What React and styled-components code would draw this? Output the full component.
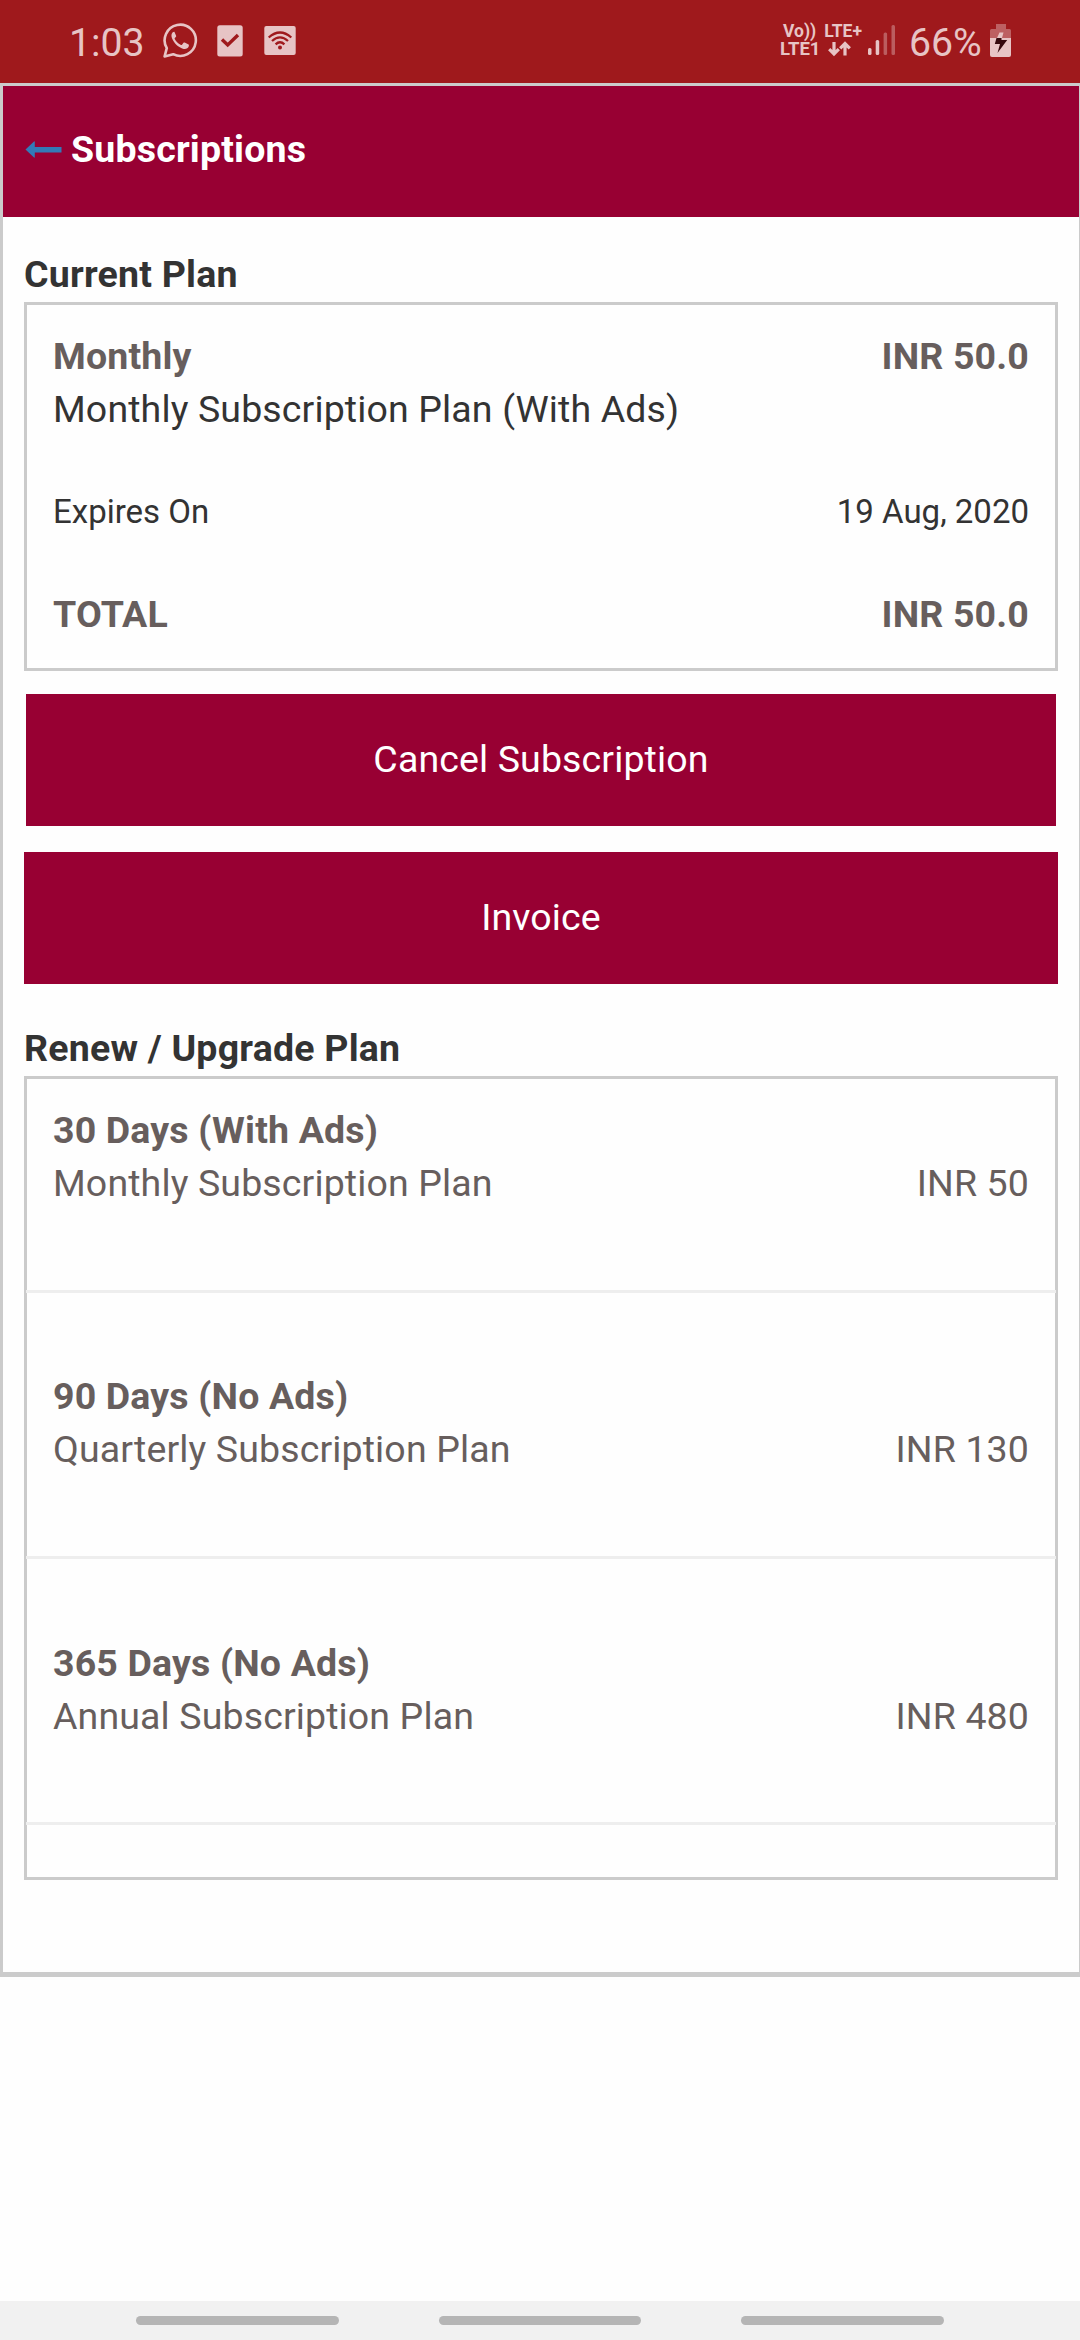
import React from "react";
import styled, { createGlobalStyle } from "styled-components";

const GlobalStyle = createGlobalStyle`
  *, *::before, *::after { box-sizing: border-box; }
  html, body { margin: 0; padding: 0; background: #fefefe; }
  body { font-family: Roboto, "Noto Sans", sans-serif; }
`;

const Screen = styled.div`
  display: flex;
  flex-direction: column;
  width: 1080px;
  height: 2340px;
  overflow: hidden;
  background: #fefefe;
`;

const StatusBar = styled.div`
  display: flex;
  flex: none;
  justify-content: space-between;
  align-items: flex-start;
  height: 83px;
  padding: 0 68px 0 69px;
  background: #9f191c;
  color: #e7c4c5;
`;

const StatusGroup = styled.div`
  display: flex;
  align-items: flex-start;
`;

const StatusText = styled.span`
  margin-top: 19px;
  margin-left: ${(p) => p.$left || 0}px;
  font-size: 39.2px;
  line-height: 48px;
  white-space: nowrap;
  width: ${(p) => p.$width}px;
`;

const StatusIcon = styled.svg`
  flex: none;
  margin: ${(p) => p.$top}px 0 0 ${(p) => p.$left}px;
`;

const Network = styled.div`
  display: grid;
  grid-template-rows: 18px 18px;
  width: 81px;
  margin-top: 22px;
  font-size: 17.5px;
  font-weight: 700;
  line-height: 18px;
`;

const NetworkLine = styled.div`
  display: flex;
  gap: 8px;
  padding-left: ${(p) => p.$indent}px;
  font-size: ${(p) => p.$size}px;
  white-space: nowrap;
`;

const Frame = styled.main`
  display: flex;
  flex: none;
  flex-direction: column;
  height: 1894px;
  border: solid #cbcbcb;
  border-width: 3px 1px 5px 3px;
`;

const Header = styled.header`
  display: flex;
  flex: none;
  align-items: flex-start;
  height: 131px;
  padding: 37px 0 0 22px;
  background: #980033;
`;

const BackIcon = styled.svg`
  flex: none;
  margin: 18px 8px 0 0;
`;

const Title = styled.h1`
  margin: 0;
  font-size: 37.5px;
  font-weight: 700;
  line-height: 53px;
  letter-spacing: 0.18px;
  color: #fff;
`;

const Content = styled.div`
  display: flex;
  flex-direction: column;
  padding: 31px 21px 0 21px;
`;

const Heading = styled.h2`
  margin: 0;
  height: 54px;
  font-size: 37.5px;
  font-weight: 700;
  line-height: 53px;
  letter-spacing: 0.22px;
  color: #333;
`;

const Card = styled.section`
  display: flex;
  flex-direction: column;
  height: ${(p) => p.$height}px;
  padding-top: 25px;
  border: 3px solid #cbcbcb;
`;

const Row = styled.div`
  display: flex;
  justify-content: space-between;
  margin-bottom: ${(p) => p.$after || 0}px;
  padding: 0 26px;
  font-size: ${(p) => (p.$small ? 33 : 37.5)}px;
  font-weight: ${(p) => (p.$bold ? 700 : 400)};
  line-height: 53px;
  letter-spacing: ${(p) => (p.$small ? "normal" : p.$bold ? "0.16px" : "0.13px")};
  color: ${(p) => (p.$dark ? "#333" : "#675e5d")};
  white-space: nowrap;
`;

const Button = styled.button`
  height: 132px;
  margin: ${(p) => p.$margin};
  padding: 0 0 2px;
  border: 0;
  background: #980033;
  color: #fff;
  font: 400 37.5px/53px Roboto, "Noto Sans", sans-serif;
  letter-spacing: 0.13px;
`;

const Plan = styled.div`
  display: flex;
  flex-direction: column;
  flex: none;
  height: ${(p) => p.$height}px;
  margin: 0 -1px;
  padding: ${(p) => p.$top}px 1px 0;
  border-bottom: 3px solid #eee;
`;

const NavBar = styled.nav`
  display: flex;
  flex: none;
  gap: 100px;
  align-items: flex-start;
  height: 39px;
  margin-top: auto;
  padding: 15px 136px 0;
  background: #f1f1f1;
`;

const NavPill = styled.span`
  flex: 1;
  height: 9px;
  border-radius: 5px;
  background: #b5b5b5;
`;

const plans = [
  { name: "30 Days (With Ads)", detail: "Monthly Subscription Plan", price: "INR 50", height: 189, top: 0 },
  { name: "90 Days (No Ads)", detail: "Quarterly Subscription Plan", price: "INR 130", height: 266, top: 77 },
  { name: "365 Days (No Ads)", detail: "Annual Subscription Plan", price: "INR 480", height: 266, top: 78 },
];

function NotificationIcons() {
  return (
    <>
      <StatusIcon $top={23} $left={21} width="35" height="35" viewBox="0 0 35 35">
        <path
          d="M1.6 33.4 3.8 25.2A15.6 15.6 0 1 1 10.2 31.2Z"
          fill="none"
          stroke="currentColor"
          strokeWidth="2.6"
          strokeLinejoin="round"
        />
        <path
          d="M11.2 8.8c-.6 0-1.2.2-1.7.8-1.2 1.3-1.4 3.5-.5 5.7 2 5 6.4 9.3 11.6 10.6 2.2.5 4.5-.5 5.1-2.4.3-1 .3-1.7-.1-2l-3.9-2c-.5-.2-.9-.1-1.2.3l-1.5 1.9c-.3.3-.6.4-1 .2-3.2-1.4-5-3.3-6.3-5.8-.2-.4-.1-.7.1-1l1.2-1.4c.2-.4.3-.6.1-1l-1.5-3.4c-.2-.4-.3-.5-.4-.5Z"
          fill="currentColor"
        />
      </StatusIcon>
      <StatusIcon $top={25} $left={19} width="26" height="32" viewBox="0 0 26 32">
        <rect x=".3" y=".3" width="25.4" height="31.2" rx="2.5" fill="currentColor" />
        <path d="M5 14.5 10.7 20 21 10" fill="none" stroke="#9f191c" strokeWidth="3.4" />
      </StatusIcon>
      <StatusIcon $top={26} $left={21} width="32" height="29" viewBox="0 0 32 29">
        <rect x=".3" y="0" width="31.4" height="29" rx="2" fill="currentColor" />
        <g fill="none" stroke="#9f191c" strokeWidth="2.3">
          <path d="M4.7 11.5Q16 1.5 27.3 11.5" />
          <path d="M8 15Q16 7.8 24 15" />
          <path d="M11.6 18.3Q16 14.3 20.4 18.3" />
        </g>
        <circle cx="16" cy="21.5" r="2" fill="#9f191c" />
      </StatusIcon>
    </>
  );
}

function NetworkStatus() {
  return (
    <Network>
      <NetworkLine $indent={3} $size={17.5}>
        <span>Vo))</span>
        <span>LTE+</span>
      </NetworkLine>
      <NetworkLine $indent={0} $size={18.5}>
        <span>LTE1</span>
        <svg width="23" height="17" viewBox="0 0 23 17">
          <g fill="none" stroke="currentColor" strokeWidth="3.2" transform="translate(0 2)">
            <path d="M6 0V12M1.2 7.2 6 12 10.8 7.2" />
            <path d="M17 13.5V2M12.2 6.3 17 1.5 21.8 6.3" />
          </g>
        </svg>
      </NetworkLine>
    </Network>
  );
}

function SignalAndBattery() {
  return (
    <>
      <StatusIcon $top={25} $left={7} width="27" height="31" viewBox="0 0 27 31">
        <g fill="currentColor">
          <rect x="0" y="23" width="3.5" height="7" rx="1.5" />
          <rect x="7.7" y="15" width="3.5" height="15" rx="1.5" />
          <g opacity=".4">
            <rect x="15.6" y="7.5" width="3.5" height="22.5" rx="1.5" />
            <rect x="23.5" y="0" width="3.5" height="30" rx="1.5" />
          </g>
        </g>
      </StatusIcon>
      <StatusText $left={14} $width={81}>66%</StatusText>
      <StatusIcon $top={24} $left={0} width="22" height="33" viewBox="0 0 22 33">
        <path d="M6 0H16V5H19.5Q21 5 21 6.5V14H0V6.5Q0 5 1.5 5H6Z" fill="#bd6062" />
        <path d="M0 14H21V31Q21 33 19 33H2Q0 33 0 31Z" fill="currentColor" />
        <path d="M9.5 8.5H13.5L12 14H7Z" fill="currentColor" />
        <path d="M6.5 14H11.5V16H17.2L7.5 29 10 20H4.8Z" fill="#35090e" />
      </StatusIcon>
    </>
  );
}

export default function App() {
  return (
    <Screen>
      <GlobalStyle />
      <StatusBar>
        <StatusGroup>
          <StatusText $width={73}>1:03</StatusText>
          <NotificationIcons />
        </StatusGroup>
        <StatusGroup>
          <NetworkStatus />
          <SignalAndBattery />
        </StatusGroup>
      </StatusBar>
      <Frame>
        <Header>
          <BackIcon width="38" height="18" viewBox="0 0 38 18">
            <path d="M.5 8.5 9 .5Q9.8 0 9.8 1V6H36.5V11.5H9.8V16Q9.8 17 9 16.5Z" fill="#337ab7" />
          </BackIcon>
          <Title>Subscriptions</Title>
        </Header>
        <Content>
          <Heading>Current Plan</Heading>
          <Card $height={369}>
            <Row $bold>
              <span>Monthly</span>
              <span>INR 50.0</span>
            </Row>
            <Row $dark $after={49}>
              <span>Monthly Subscription Plan (With Ads)</span>
            </Row>
            <Row $dark $small $after={50}>
              <span>Expires On</span>
              <span>19 Aug, 2020</span>
            </Row>
            <Row $bold>
              <span>TOTAL</span>
              <span>INR 50.0</span>
            </Row>
          </Card>
          <Button $margin="23px 2px 26px">Cancel Subscription</Button>
          <Button $margin="0 0 38px">Invoice</Button>
          <Heading>Renew / Upgrade Plan</Heading>
          <Card $height={804}>
            {plans.map((plan) => (
              <Plan key={plan.name} $height={plan.height} $top={plan.top}>
                <Row $bold>
                  <span>{plan.name}</span>
                </Row>
                <Row>
                  <span>{plan.detail}</span>
                  <span>{plan.price}</span>
                </Row>
              </Plan>
            ))}
          </Card>
        </Content>
      </Frame>
      <NavBar>
        <NavPill />
        <NavPill />
        <NavPill />
      </NavBar>
    </Screen>
  );
}
